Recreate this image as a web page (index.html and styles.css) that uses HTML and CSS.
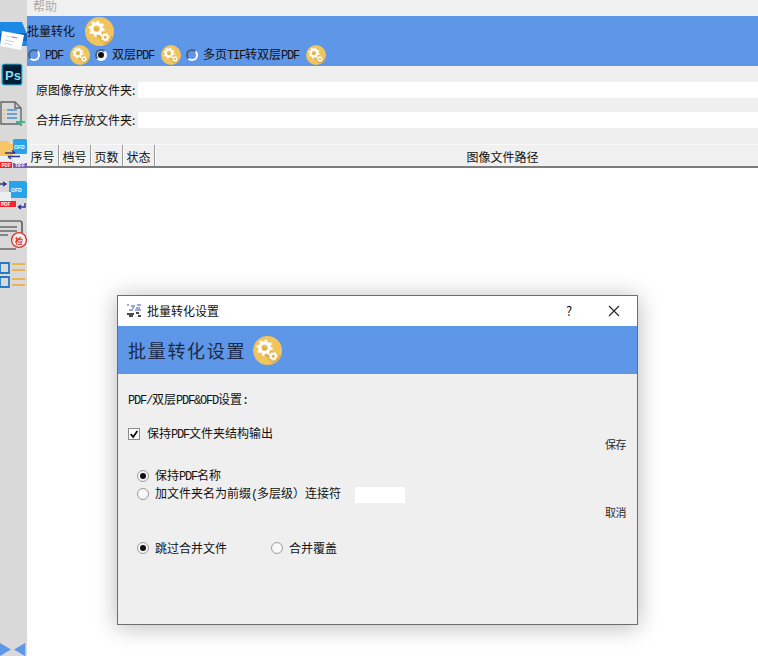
FILE: index.html
```html
<!DOCTYPE html>
<html lang="zh">
<head>
<meta charset="utf-8">
<title>批量转化</title>
<link rel="stylesheet" href="styles.css">
</head>
<body>
<svg class="defs" width="0" height="0">
  <symbol id="gear" viewBox="0 0 30 30">
    <circle cx="15" cy="15" r="15" fill="#f0c55c"/>
    <path d="M10 10 L29 21 A15 15 0 0 1 21 29 L9 17Z" fill="#e0b04a"/>
    <circle cx="12" cy="12" r="5" fill="none" stroke="#fff" stroke-width="3.4"/>
    <circle cx="12" cy="12" r="7.4" fill="none" stroke="#fff" stroke-width="2" stroke-dasharray="2.6 3.2"/>
    <circle cx="21" cy="21" r="2.6" fill="none" stroke="#fff" stroke-width="2"/>
    <circle cx="21" cy="21" r="4" fill="none" stroke="#fff" stroke-width="1.2" stroke-dasharray="1.6 1.6"/>
  </symbol>
</svg>

<div class="app">
  <aside class="side">
    <svg class="ic ic1" viewBox="0 0 27 30">
      <path d="M0 2H22L27 14V26H0Z" fill="#1e88e5"/>
      <path d="M0 13H27V21H0Z" fill="#1565c0"/>
      <path d="M2 11L24 15L21 30L0 26Z" fill="#fff"/>
      <path d="M6 16L18 18M5 20L14 22M4 23L12 25" stroke="#c9d3de" stroke-width="1.2"/>
      <path d="M12 17L17 18" stroke="#e57373" stroke-width="1"/>
    </svg>
    <svg class="ic ic2" viewBox="0 0 27 24">
      <rect x="2" y="1" width="20" height="21" rx="2" fill="#001e36" stroke="#31c5f0" stroke-width="1.2"/>
      <text x="5" y="16.5" class="ps">Ps</text>
    </svg>
    <svg class="ic ic3" viewBox="0 0 27 26">
      <path d="M1 1H15L21 7V23H1Z" fill="none" stroke="#666" stroke-width="1.4"/>
      <path d="M15 1V7H21" fill="none" stroke="#666" stroke-width="1.4"/>
      <path d="M7 9H17M7 13H17M7 17H17" stroke="#4a90d9" stroke-width="1.5"/>
      <path d="M3 9H5M3 13H5M3 17H5" stroke="#f0c55c" stroke-width="1.5"/>
      <path d="M21 16V25M16 21H25" stroke="#4caf8a" stroke-width="2.2"/>
    </svg>
    <svg class="ic ic4" viewBox="0 0 27 30">
      <path d="M0 2H8L10 5H15V17H0Z" fill="#f6c667"/>
      <rect x="13" y="15" width="14" height="9" fill="#eceff1"/>
      <rect x="0" y="17" width="12" height="6" fill="#eceff1"/>
      <rect x="13" y="0" width="14" height="15" rx="1.5" fill="#29a3ec"/>
      <text x="14" y="10" class="mini wt">OFD</text>
      <path d="M5 14H15M15 14L12 11.5M20 17.5H8M8 17.5L11 20" stroke="#283593" stroke-width="1.5" fill="none"/>
      <rect x="0" y="23" width="12" height="6" fill="#f5222d"/>
      <text x="1.5" y="28" class="mini2 wt">PDF</text>
      <rect x="13" y="24" width="14" height="5" fill="#7e57c2"/>
      <text x="15" y="28" class="mini2 wt">TIFF</text>
    </svg>
    <svg class="ic ic5" viewBox="0 0 27 30">
      <path d="M0 4H5M3 2L6 4L3 6" stroke="#283593" stroke-width="1.4" fill="none"/>
      <path d="M9 1H24Q27 1 27 4V18H12Q9 18 9 15Z" fill="#29a3ec"/>
      <text x="11" y="12" class="mini wt">OFD</text>
      <rect x="0" y="12" width="11" height="14" fill="#eceff1"/>
      <rect x="0" y="21" width="16" height="6" fill="#f5222d"/>
      <text x="1" y="26.4" class="mini2 wt">PDF</text>
      <path d="M25 23V27H18M18 27L21 25M18 27L21 29" stroke="#283593" stroke-width="1.4" fill="none"/>
    </svg>
    <svg class="ic ic6" viewBox="0 0 27 30">
      <path d="M0 1H20Q22 1 22 3V13" fill="none" stroke="#333" stroke-width="1.2"/>
      <path d="M0 7H17M0 11H17M0 15H8M0 29H16" stroke="#333" stroke-width="1.2"/>
      <circle cx="19" cy="20" r="7.4" fill="#efefef" stroke="#d9362b" stroke-width="1.3"/>
      <text x="15" y="23.5" class="stamp">检</text>
    </svg>
    <svg class="ic ic7" viewBox="0 0 27 27">
      <path d="M0 1H9V11H0ZM0 15H9V25H0Z" fill="none" stroke="#2579c4" stroke-width="1.8"/>
      <path d="M12 2H25M12 8H25M12 17H25M12 23H25" stroke="#f5a623" stroke-width="1.5"/>
    </svg>
    <svg class="ic collapse" viewBox="0 0 27 13">
      <path d="M0 0L11 6.5L0 13ZM25 0L14 6.5L25 13Z" fill="#5e96e8"/>
      <path d="M25 0H26V13H25Z" fill="#a9c7ef"/>
    </svg>
  </aside>

  <main class="main">
    <div class="menu">帮助</div>
    <header class="banner">
      <div class="banner-title">
        <span>批量转化</span>
        <svg class="gear gear-lg"><use href="#gear"/></svg>
      </div>
      <div class="modes">
        <span class="radio radio-blue"></span><span class="lbl"><i>PDF</i></span>
        <svg class="gear gear-sm"><use href="#gear"/></svg>
        <span class="radio radio-blue on"></span><span class="lbl">双层<i>PDF</i></span>
        <svg class="gear gear-sm"><use href="#gear"/></svg>
        <span class="radio radio-blue"></span><span class="lbl">多页<i>TIF</i>转双层<i>PDF</i></span>
        <svg class="gear gear-sm"><use href="#gear"/></svg>
      </div>
    </header>
    <section class="paths">
      <div class="path-row"><label>原图像存放文件夹:</label><div class="field"></div></div>
      <div class="path-row"><label>合并后存放文件夹:</label><div class="field"></div></div>
    </section>
    <div class="thead">
      <div class="th">序号</div>
      <div class="th">档号</div>
      <div class="th">页数</div>
      <div class="th">状态</div>
      <div class="th th-wide">图像文件路径</div>
    </div>
    <div class="tbody"></div>
  </main>
</div>

<div class="dialog">
  <div class="titlebar">
    <svg class="app-ic" viewBox="0 0 17 14">
      <path d="M1 1H3M5 2H9M11 1H15M6 4H8M10 4H14M3 6H7M9 6H15" stroke="#3f51b5" stroke-width="1.2"/>
      <path d="M1 10H8M10 9H13M3 12H7M12 12H15" stroke="#111" stroke-width="1.6"/>
    </svg>
    <span class="dlg-name">批量转化设置</span>
    <span class="help">?</span>
    <svg class="close" viewBox="0 0 12 12"><path d="M1 1L11 11M11 1L1 11" stroke="#222" stroke-width="1.1"/></svg>
  </div>
  <div class="dlg-banner">
    <span class="dlg-heading">批量转化设置</span>
    <svg class="gear gear-lg"><use href="#gear"/></svg>
  </div>
  <div class="dlg-body">
    <div class="dlg-form">
      <div class="row r-title"><span><i>PDF/</i>双层<i>PDF&amp;OFD</i>设置<i>:</i></span></div>
      <div class="row r-check"><span class="check"><svg viewBox="0 0 12 12"><path d="M2 6L5 9.5L10 2.5" fill="none" stroke="#111" stroke-width="2.2"/></svg></span><span class="gap-l">保持<i>PDF</i>文件夹结构输出</span></div>
      <div class="row r-radio1"><span class="radio on"></span><span class="opt">保持<i>PDF</i>名称</span></div>
      <div class="row r-radio2"><span class="radio"></span><span class="opt">加文件夹名为前缀<i>(</i>多层级）连接符</span><span class="mini-field"></span></div>
      <div class="row r-radio3"><span class="radio on"></span><span class="opt">跳过合并文件</span><span class="radio second"></span><span class="opt">合并覆盖</span></div>
    </div>
    <div class="dlg-actions">
      <span class="act act-save">保存</span>
      <span class="act act-cancel">取消</span>
    </div>
  </div>
</div>
</body>
</html>
```
FILE: styles.css
```css
* { box-sizing: border-box; }
html, body { margin: 0; height: 100%; }
body {
  width: 758px; height: 656px; overflow: hidden; background: #fff; color: #111;
  font: 12px/16px "Noto Sans CJK SC", "Liberation Sans", sans-serif;
  position: relative;
}
/* half-width Latin: 6px per character, as in the bitmap font of the original */
i { font: normal 12px/16px "Liberation Mono", monospace; letter-spacing: -1.2px; }
.defs { position: absolute; }

.app { display: flex; height: 656px; }
.side {
  width: 27px; flex: none; background: #d9d9d9; display: flex; flex-direction: column;
  padding-top: 20px; position: relative;
}
.ic { display: block; width: 27px; flex: none; }
.ic1 { height: 30px; }
.ic2 { height: 24px; margin-top: 13px; }
.ic3 { height: 26px; margin-top: 14px; }
.ic4 { height: 30px; margin-top: 12px; }
.ic5 { height: 30px; margin-top: 11px; }
.ic6 { height: 30px; margin-top: 10px; }
.ic7 { height: 27px; margin-top: 12px; }
.collapse { height: 13px; margin-top: auto; }
.ps { font: bold 13px "Liberation Sans", sans-serif; fill: #8fdcf5; }
.mini { font: bold 5px "Liberation Sans", sans-serif; }
.mini2 { font: bold 4.6px "Liberation Sans", sans-serif; }
.wt { fill: #fff; }
.stamp { font: bold 8px "Noto Sans CJK SC", sans-serif; fill: #d9362b; }

.main { flex: 1; display: flex; flex-direction: column; min-width: 0; }
.menu { height: 16px; background: #f0f0f0; color: #a9a9a9; padding-left: 6px; line-height: 12px; }
.banner { height: 50px; background: #5e96e8; display: flex; flex-direction: column; }
.banner-title { display: flex; align-items: center; height: 30px; }
.banner-title .gear-lg { margin-left: 10px; }
.gear { flex: none; display: block; }
.gear-lg { width: 29px; height: 29px; }
.gear-sm { width: 20px; height: 20px; }
.modes { display: flex; align-items: center; height: 18px; padding-left: 1px; }
.lbl { margin-left: 5px; margin-right: 7px; white-space: nowrap; }
.modes .gear-sm { margin-right: 5px; }
.radio {
  width: 12px; height: 12px; border-radius: 50%; flex: none; background: #f8f8f8;
  border: 1px solid #9a9a9a; display: inline-flex; align-items: center; justify-content: center;
}
.radio-blue {
  background: #5e96e8; border: 2px solid; border-color: #47608a #fff #fff #47608a;
}
.radio-blue.on { background: #e9eef6; }
.radio.on::after { content: ""; width: 6px; height: 6px; border-radius: 50%; background: #111; }

.paths { height: 78px; background: #efefef; padding-top: 16px; display: flex; flex-direction: column; gap: 14px; }
.path-row { display: flex; height: 16px; align-items: center; }
.path-row label { width: 111px; padding-left: 9px; flex: none; white-space: nowrap; }
.field { flex: 1; height: 16px; background: #fff; }

.thead { height: 24px; display: flex; background: #f0f0f0; border-top: 1px solid #fafafa; border-bottom: 2px solid #7c7c7c; }
.th { width: 32px; text-align: center; line-height: 23px; border-right: 1px solid #9a9a9a; box-shadow: 1px 0 0 #fff; white-space: nowrap; }
.th-wide { flex: 1; border-right: 0; box-shadow: none; padding-left: 92px; }
.tbody { flex: 1; background: #fff; }

/* floating dialog window */
.dialog {
  position: absolute; left: 117px; top: 295px; width: 521px; height: 330px;
  background: #efefef; border: 1px solid #6e6e6e; box-shadow: 0 2px 22px rgba(0,0,0,.28);
  display: flex; flex-direction: column;
}
.titlebar { height: 30px; background: #fff; display: flex; align-items: center; padding-left: 8px; flex: none; }
.app-ic { width: 17px; height: 14px; flex: none; }
.dlg-name { margin-left: 4px; }
.help { margin-left: auto; width: 12px; font-size: 13px; text-align: center; }
.close { width: 12px; height: 12px; margin-left: 33px; margin-right: 17px; }
.dlg-banner { height: 48px; background: #5e96e8; display: flex; align-items: center; padding-left: 10px; flex: none; }
.dlg-heading { font-size: 18px; letter-spacing: 1.7px; color: #1b2a4a; margin-right: 7px; line-height: 24px; white-space: nowrap; }
.dlg-body { flex: 1; display: flex; }
.dlg-form { flex: 1; padding: 16px 0 0 10px; }
.row { display: flex; align-items: center; height: 20px; white-space: nowrap; }
.r-check { margin-top: 14px; }
.r-radio1 { margin-top: 23px; padding-left: 9px; height: 18px; }
.r-radio2 { margin-top: 0; padding-left: 9px; height: 18px; }
.r-radio3 { margin-top: 35px; padding-left: 9px; }
.check {
  width: 12px; height: 12px; background: #fff; border: 1px solid #8a8a8a; flex: none; display: block;
}
.check svg { display: block; width: 10px; height: 10px; }
.gap-l { margin-left: 7px; }
.opt { margin-left: 6px; }
.mini-field { width: 50px; height: 16px; background: #fff; margin: 2px 0 0 14px; }
.second { margin-left: 44px; }
.dlg-actions { width: 62px; flex: none; display: flex; flex-direction: column; padding: 62px 0 0 30px; font-size: 11px; }
.act { display: block; height: 16px; line-height: 16px; white-space: nowrap; color: #2a2a2a; letter-spacing: -.5px; }
.act-cancel { margin-top: 52px; }
```
